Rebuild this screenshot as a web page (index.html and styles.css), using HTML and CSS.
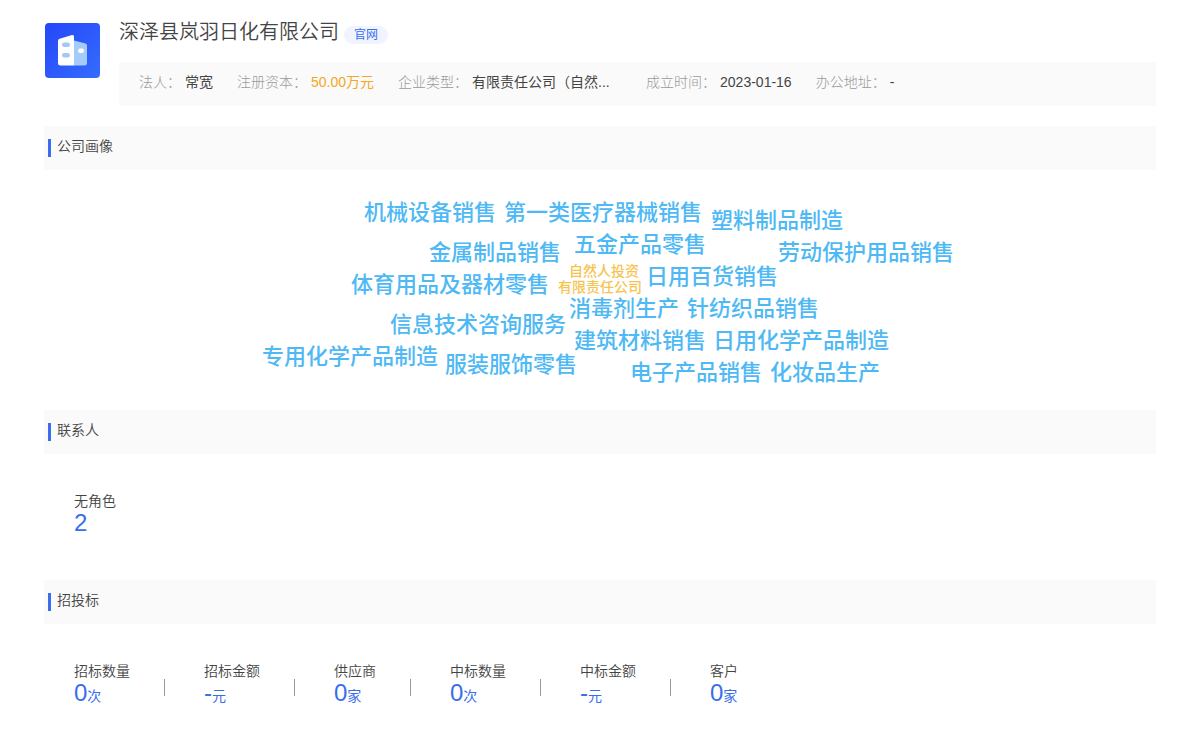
FILE: index.html
```html
<!DOCTYPE html>
<html lang="zh-CN">
<head>
  <meta charset="UTF-8">
  <meta name="viewport" content="width=device-width, initial-scale=1.0">
  <title>深泽县岚羽日化有限公司</title>
  <link rel="stylesheet" href="styles.css">
</head>
<body>
  <div class="page">
    <header class="company">
      <svg class="logo" viewBox="0 0 56 56" aria-hidden="true">
        <defs>
          <linearGradient id="logoBg" x1="0" y1="0" x2="1" y2="1">
            <stop offset="0" stop-color="#2546fa"/>
            <stop offset="1" stop-color="#356dfc"/>
          </linearGradient>
        </defs>
        <rect x="1" y="1" width="55" height="55" rx="4" fill="url(#logoBg)"/>
        <path d="M30 18.500L41.500 21.500Q43 22 43 23.500V41Q43 43.500 40.500 43.500H30Z" fill="#a5cbfb"/>
        <path d="M14 19Q14 17.200 15.700 16.700L28 13Q30 12.500 30 14.500V43.500H16.500Q14 43.500 14 41Z" fill="#fff"/>
        <rect x="18" y="20.500" width="8" height="4.500" rx="2.200" fill="#a5c6f8"/>
        <rect x="18" y="31" width="8" height="4.500" rx="2.200" fill="#a5c6f8"/>
        <rect x="34" y="26.500" width="6" height="4.500" rx="2.200" fill="#fff"/>
      </svg>
      <div class="company-main">
        <div class="title-row">
          <h1>深泽县岚羽日化有限公司</h1>
          <a class="badge" href="#">官网</a>
        </div>
        <dl class="info">
          <div><dt>法人：</dt><dd>常宽</dd></div>
          <div><dt>注册资本：</dt><dd class="money">50.00万元</dd></div>
          <div><dt>企业类型：</dt><dd class="type">有限责任公司（自然...</dd></div>
          <div><dt>成立时间：</dt><dd>2023-01-16</dd></div>
          <div><dt>办公地址：</dt><dd>-</dd></div>
        </dl>
      </div>
    </header>

    <section>
      <h2>公司画像</h2>
      <div class="cloud">
        <svg width="720" height="240">
          <text x="124" y="50">机械设备销售</text>
          <text x="264" y="50">第一类医疗器械销售</text>
          <text x="471" y="58">塑料制品制造</text>
          <text x="189" y="90">金属制品销售</text>
          <text x="334" y="82">五金产品零售</text>
          <text x="538" y="90">劳动保护用品销售</text>
          <text x="329" y="106" class="small">自然人投资</text>
          <text x="318" y="122" class="small">有限责任公司</text>
          <text x="111" y="122">体育用品及器材零售</text>
          <text x="406" y="114">日用百货销售</text>
          <text x="329" y="146">消毒剂生产</text>
          <text x="447" y="146">针纺织品销售</text>
          <text x="150" y="162">信息技术咨询服务</text>
          <text x="334" y="178">建筑材料销售</text>
          <text x="473" y="178">日用化学产品制造</text>
          <text x="22" y="194">专用化学产品制造</text>
          <text x="205" y="202">服装服饰零售</text>
          <text x="390" y="210">电子产品销售</text>
          <text x="530" y="210">化妆品生产</text>
        </svg>
      </div>
    </section>

    <section>
      <h2>联系人</h2>
      <ul class="stats">
        <li><span>无角色</span><strong>2</strong></li>
      </ul>
    </section>

    <section>
      <h2>招投标</h2>
      <ul class="stats">
        <li><span>招标数量</span><strong>0<small>次</small></strong></li>
        <li><span>招标金额</span><strong>-<small>元</small></strong></li>
        <li><span>供应商</span><strong>0<small>家</small></strong></li>
        <li><span>中标数量</span><strong>0<small>次</small></strong></li>
        <li><span>中标金额</span><strong>-<small>元</small></strong></li>
        <li><span>客户</span><strong>0<small>家</small></strong></li>
      </ul>
    </section>
  </div>
</body>
</html>
```
FILE: styles.css
```css
* {
  box-sizing: border-box;
}

body {
  margin: 0;
  background-color: #fff;
  color: #444;
  font-family: "Liberation Sans", "Noto Sans CJK SC", sans-serif;
  font-size: 14px;
  line-height: 20px;
}

h1, h2, ul, dl, dd {
  margin: 0;
  padding: 0;
  font-weight: 350;
}

.page {
  padding: 16px 44px;
}

/* Company header */
.company {
  display: flex;
  align-items: flex-start;
  gap: 19px;
  margin-bottom: 20px;
}

.logo {
  flex: none;
  width: 56px;
  height: 56px;
  margin-top: 6px;
}

.company-main {
  flex: 1;
  min-width: 0;
}

.title-row {
  display: flex;
  align-items: flex-end;
  gap: 5px;
  height: 28px;
  margin-bottom: 18px;
}

h1 {
  font-size: 20px;
  line-height: 24px;
}

.badge {
  padding: 0 10px;
  border-radius: 9px;
  background-color: #f0f4fe;
  color: #3a6cee;
  font-size: 12px;
  line-height: 18px;
  text-decoration: none;
}

.info {
  display: flex;
  gap: 24px;
  height: 44px;
  padding: 10px 20px;
  background-color: #fafafa;
  white-space: nowrap;
}

.info div {
  display: flex;
  gap: 4px;
}

.info dt {
  color: #999;
  font-weight: 300;
}

.info dd {
  color: #444;
  font-weight: 400;
}

.info .money {
  color: #f5a623;
}

.info .type {
  width: 150px;
}

/* Sections */
h2 {
  display: flex;
  align-items: flex-start;
  gap: 6px;
  height: 44px;
  padding: 10px 4px;
  background-color: #fafafa;
  font-size: 14px;
}

h2::before {
  content: "";
  width: 3px;
  height: 18px;
  margin-top: 3px;
  background-color: #3a6cee;
}

.cloud {
  display: flex;
  justify-content: center;
}

.cloud text {
  fill: #4eb9f4;
  font-size: 22px;
  font-weight: 500;
}

.cloud .small {
  fill: #f7c34f;
  font-size: 14px;
}

.stats {
  display: flex;
  padding: 37px 30px 35px;
  list-style: none;
}

.stats li {
  display: flex;
  flex-direction: column;
  height: 54px;
}

.stats li + li {
  margin-left: 34px;
  padding-left: 40px;
  background: linear-gradient(#999, #999) no-repeat 0 18px / 1px 17px;
}

.stats strong {
  color: #3a6cee;
  font-size: 24px;
  font-weight: 400;
  line-height: 24px;
}

.stats small {
  font-size: 14px;
}
```
